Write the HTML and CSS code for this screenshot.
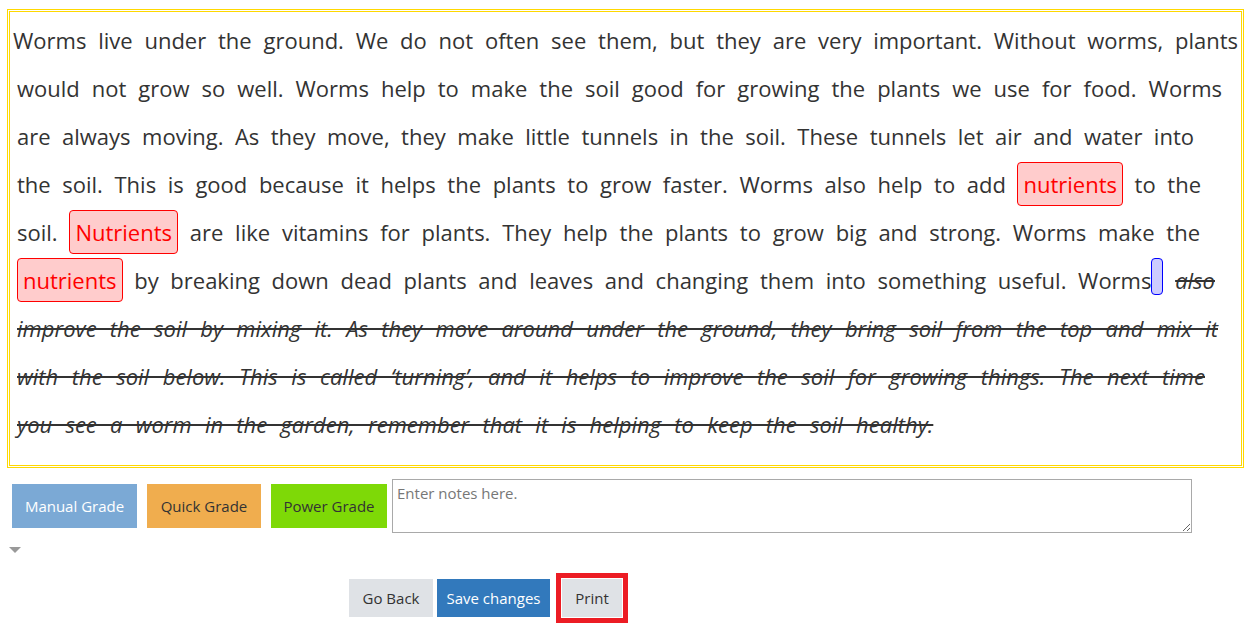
FILE: index.html
```html
<!DOCTYPE html>
<html>
<head>
<meta charset="utf-8">
<link rel="stylesheet" href="styles.css">
</head>
<body>
<div class="page">
  <div class="essay">
    <div class="line first">Worms live under the ground. We do not often see them, but they are very important. Without worms, plants</div>
    <div class="line end-19">would not grow so well. Worms help to make the soil good for growing the plants we use for food. Worms</div>
    <div class="line end-47">are always moving. As they move, they make little tunnels in the soil. These tunnels let air and water into</div>
    <div class="line end-40">the soil. This is good because it helps the plants to grow faster. Worms also help to add <span class="mark">nutrients</span> to the</div>
    <div class="line end-41">soil. <span class="mark">Nutrients</span> are like vitamins for plants. They help the plants to grow big and strong. Worms make the</div>
    <div class="line end-26"><span class="mark">nutrients</span> by breaking down dead plants and leaves and changing them into something useful. Worms<span class="cursor"></span> <s class="cut">also</s></div>
    <div class="line end-23"><s class="cut">improve the soil by mixing it. As they move around under the ground, they bring soil from the top and mix it</s></div>
    <div class="line end-36"><s class="cut">with the soil below. This is called ‘turning’, and it helps to improve the soil for growing things. The next time</s></div>
    <div class="line last"><s class="cut">you see a worm in the garden, remember that it is helping to keep the soil healthy.</s></div>
  </div>

  <div class="controls">
    <button class="grade manual">Manual Grade</button>
    <button class="grade quick">Quick Grade</button>
    <button class="grade power">Power Grade</button>
    <textarea class="notes" placeholder="Enter notes here."></textarea>
  </div>

  <div class="caret"></div>

  <div class="actions">
    <button class="act back">Go Back</button>
    <button class="act save">Save changes</button>
    <button class="act print">Print</button>
  </div>
</div>
</body>
</html>
```

FILE: styles.css
```css
html, body {
  margin: 0;
  padding: 0;
  background: #ffffff;
}

.page {
  padding: 11px 0 10px 9px;
  font-family: "Open Sans", "Noto Sans", sans-serif;
}

.essay {
  width: 1231px;
  border: 1px solid #ffd800;
  outline: 1px solid #ffd800;
  outline-offset: 1px;
  padding: 4px 0 17px 0;
  box-sizing: content-box;
  color: #333333;
  font-size: 22px;
  line-height: 48px;
}

.line {
  padding: 0 22px 0 7px;
  text-align: justify;
  text-align-last: justify;
  white-space: nowrap;
}

.line.first {
  padding-left: 3px;
  padding-right: 3px;
}

.line.end-19 { padding-right: 19px; }
.line.end-23 { padding-right: 23px; }
.line.end-26 { padding-right: 26px; }
.line.end-36 { padding-right: 36px; }
.line.end-40 { padding-right: 40px; }
.line.end-41 { padding-right: 41px; }
.line.end-47 { padding-right: 47px; }

.line.last {
  text-align: left;
  text-align-last: left;
  word-spacing: 7.5px;
}

.mark {
  display: inline-block;
  padding: 6px 5px;
  line-height: 30px;
  border: 1px solid #ff0000;
  border-radius: 4px;
  background: #ffcccc;
  color: #ff0000;
  word-spacing: 0;
}

.cursor {
  display: inline-block;
  width: 10px;
  height: 35px;
  border: 1px solid #0000ff;
  border-radius: 4px;
  background: #ccccff;
  vertical-align: -6px;
}

.cut {
  font-style: italic;
  text-decoration: line-through;
  color: #333333;
}

.controls {
  display: flex;
  align-items: flex-start;
  margin-top: 13px;
  padding-left: 3px;
}

.grade {
  height: 44px;
  margin-top: 5px;
  margin-right: 10px;
  border: none;
  padding: 0;
  white-space: nowrap;
  font-family: "Open Sans", "Noto Sans", sans-serif;
  font-size: 15px;
  color: #333333;
}

.grade.manual {
  width: 125px;
  background: #7ba9d5;
  color: #ffffff;
}

.grade.quick {
  width: 114px;
  background: #f0ad4e;
}

.grade.power {
  width: 116px;
  margin-right: 5px;
  background: #7ed907;
}

.notes {
  width: 800px;
  height: 54px;
  box-sizing: border-box;
  margin: 0;
  border: 1px solid #a9a9a9;
  padding: 3px 4px;
  font-family: "Open Sans", "Noto Sans", sans-serif;
  font-size: 15px;
  color: #333333;
}

.notes::placeholder {
  color: #777777;
}

.caret {
  width: 0;
  height: 0;
  margin: 14px 0 0 0;
  border-left: 6px solid transparent;
  border-right: 6px solid transparent;
  border-top: 6px solid #999999;
}

.actions {
  display: flex;
  gap: 4px;
  margin-top: 26px;
  padding-left: 340px;
}

.act {
  height: 38px;
  border: none;
  padding: 0;
  white-space: nowrap;
  font-family: "Open Sans", "Noto Sans", sans-serif;
  font-size: 15px;
  color: #333333;
  background: #dfe2e6;
}

.act.back {
  width: 84px;
}

.act.save {
  width: 113px;
  background: #3279bc;
  color: #ffffff;
}

.act.print {
  width: 60px;
  margin-left: 8px;
  outline: 5px solid #ec1c24;
  outline-offset: 1px;
}
```
